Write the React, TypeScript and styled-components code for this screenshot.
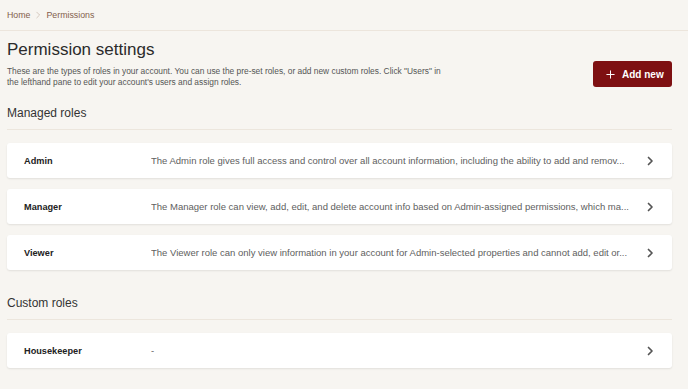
import React from 'react';
import styled, { createGlobalStyle } from 'styled-components';

const GlobalStyle = createGlobalStyle`
    html, body {
        margin: 0;
        padding: 0;
        background: #f7f5f1;
        font-family: "Liberation Sans", Arial, sans-serif;
    }
`;

const Page = styled.div`
    min-height: 389px;
    background: #f7f5f1;
`;

const Breadcrumbs = styled.nav`
    display: flex;
    align-items: center;
    gap: 4px;
    height: 30px;
    padding-left: 7px;
    border-bottom: 1px solid #ece5dc;
    font-size: 8.8px;
    color: #84604c;
`;

const Crumb = styled.span`
    color: #84604c;
`;

const Content = styled.div`
    padding: 9px 16px 0 7px;
`;

const HeaderRow = styled.div`
    display: flex;
    justify-content: space-between;
    align-items: flex-end;
`;

const Title = styled.h1`
    margin: 0;
    font-size: 17px;
    line-height: 20px;
    font-weight: 500;
    color: #2b2b2b;
`;

const Intro = styled.p`
    margin: 6px 0 0;
    max-width: 440px;
    font-size: 8.4px;
    line-height: 11px;
    color: #555;
`;

const AddButton = styled.button`
    display: flex;
    align-items: center;
    gap: 7px;
    height: 26px;
    width: 79px;
    padding: 0 0 0 13px;
    margin-bottom: 1px;
    border: none;
    border-radius: 3px;
    background: #7e1012;
    color: #fff;
    font-family: inherit;
    font-size: 10px;
    font-weight: bold;
`;

const SectionTitle = styled.h2<{ $top: number }>`
    margin: ${props => props.$top}px 0 0;
    font-size: 12px;
    line-height: 16px;
    font-weight: 500;
    color: #333;
    padding-bottom: 8px;
    border-bottom: 1px solid #ece6dd;
`;

const List = styled.div`
    display: flex;
    flex-direction: column;
    gap: 11px;
    margin-top: 13px;
`;

const Row = styled.div`
    display: flex;
    align-items: center;
    height: 35px;
    padding: 0 17px;
    background: #fff;
    border-radius: 3px;
    box-shadow: 0 1px 2px rgba(0, 0, 0, 0.09);
`;

const RoleName = styled.div`
    width: 127px;
    flex-shrink: 0;
    font-size: 9.2px;
    font-weight: bold;
    color: #222;
`;

const RoleDescription = styled.div`
    flex: 1;
    min-width: 0;
    padding-right: 12px;
    font-size: 9.5px;
    color: #606060;
    white-space: nowrap;
    overflow: hidden;
    text-overflow: ellipsis;
`;

const Chevron = ({ size = 10, color = '#555', width = 1.7 }: { size?: number, color?: string, width?: number }) => (
    <svg width={size} height={size} viewBox="0 0 10 10" fill="none">
        <path d="M3.5 1.5 L7 5 L3.5 8.5" stroke={color} strokeWidth={width} strokeLinecap="round" strokeLinejoin="round" />
    </svg>
);

// descriptions are shown already shortened, as the list gives them
const managedRoles = [
    { name: 'Admin', description: 'The Admin role gives full access and control over all account information, including the ability to add and remov...' },
    { name: 'Manager', description: 'The Manager role can view, add, edit, and delete account info based on Admin-assigned permissions, which ma...' },
    { name: 'Viewer', description: 'The Viewer role can only view information in your account for Admin-selected properties and cannot add, edit or...' },
];

const customRoles = [
    { name: 'Housekeeper', description: '-' },
];

function RoleRow({ name, description }: { name: string, description: string }) {
    return (
        <Row>
            <RoleName>{name}</RoleName>
            <RoleDescription>{description}</RoleDescription>
            <Chevron />
        </Row>
    );
}

export default function App() {
    return (
        <Page>
            <GlobalStyle />
            <Breadcrumbs>
                <Crumb>Home</Crumb>
                <Chevron size={8} color="#c9b8ab" width={0.9} />
                <Crumb>Permissions</Crumb>
            </Breadcrumbs>

            <Content>
                <HeaderRow>
                    <div>
                        <Title>Permission settings</Title>
                        <Intro>
                            These are the types of roles in your account. You can use the pre-set roles, or add new custom roles. Click "Users" in the lefthand pane to edit your account's users and assign roles.
                        </Intro>
                    </div>
                    <AddButton>
                        <svg width="9" height="9" viewBox="0 0 10 10">
                            <path d="M5 0.5 V9.5 M0.5 5 H9.5" stroke="#fff" strokeWidth="1.1" />
                        </svg>
                        Add new
                    </AddButton>
                </HeaderRow>

                <SectionTitle $top={17}>Managed roles</SectionTitle>
                <List>
                    {managedRoles.map(role => <RoleRow key={role.name} {...role} />)}
                </List>

                <SectionTitle $top={25}>Custom roles</SectionTitle>
                <List>
                    {customRoles.map(role => <RoleRow key={role.name} {...role} />)}
                </List>
            </Content>
        </Page>
    );
}
